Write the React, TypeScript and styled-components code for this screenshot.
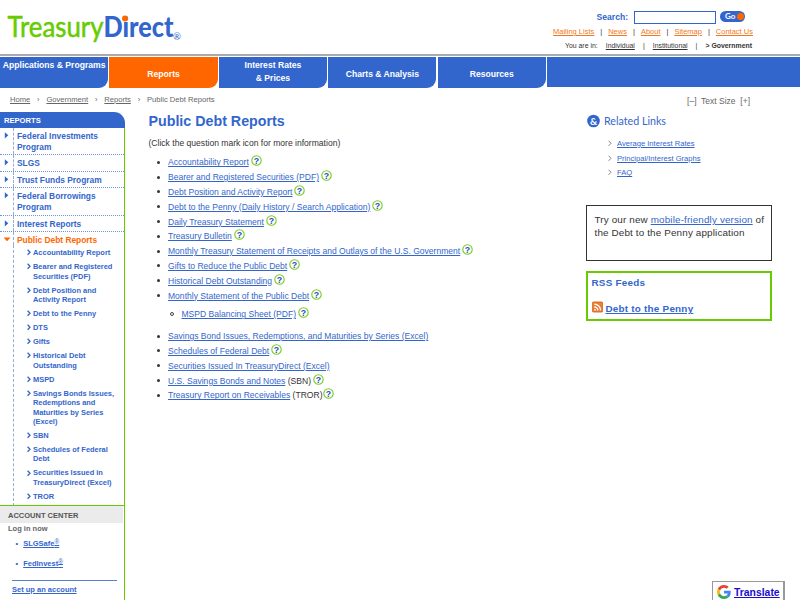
import React from "react";
import styled, { createGlobalStyle } from "styled-components";

const BLUE = "#3366cc";
const ORANGE = "#ff6600";
const GREEN = "#66cc00";

const GlobalStyle = createGlobalStyle`
  html, body { margin: 0; background: #fff; overflow: hidden; }
  body { font-family: "Liberation Sans", Arial, sans-serif; color: #333; }
  *, *::before, *::after { box-sizing: border-box; }
  ul { list-style: none; margin: 0; padding: 0; }
`;

const Page = styled.div`
  width: 800px;
  height: 600px;
  overflow: hidden;
`;

const Header = styled.header`
  height: 54px;
  display: flex;
  justify-content: space-between;
`;

const Logo = styled.svg`
  display: block;
  width: 200px;
  height: 54px;
  font-family: "Lato", sans-serif;
`;

const HeaderTools = styled.div`
  width: 250px;
  padding-top: 10px;
`;

const SearchRow = styled.form`
  display: flex;
  align-items: center;
  height: 14px;
  margin: 0;
  padding-left: 46.5px;
`;

const SearchLabel = styled.label`
  width: 37.5px;
  font-size: 8.6px;
  font-weight: bold;
  color: ${BLUE};
`;

const SearchInput = styled.input`
  width: 82px;
  height: 13px;
  padding: 0 2px;
  border: 1px solid ${BLUE};
  background: #fff;
  font-size: 8px;
`;

const GoButton = styled.button`
  display: flex;
  align-items: center;
  justify-content: space-between;
  width: 25px;
  height: 11px;
  margin: -2px 0 0 4px;
  padding: 0 1px 0 5px;
  border: 0;
  border-radius: 6px;
  background: ${BLUE};
  color: #fff;
  font: bold 8px/11px "Lato", sans-serif;

  &::after {
    content: "";
    flex: none;
    width: 7px;
    height: 7px;
    border-radius: 50%;
    background: ${ORANGE};
  }
`;

const LinkRow = styled.div`
  display: flex;
  justify-content: space-between;
  width: 200px;
  height: 15px;
  margin-left: 3px;
  font-size: 7.5px;
  line-height: 15px;
  white-space: nowrap;
`;

const LocationRow = styled(LinkRow)`
  width: 187px;
  margin-left: 15px;
  font-size: 6.9px;
  line-height: 13px;
`;

const Anchor = styled.a<{ $color?: string }>`
  color: ${(p) => p.$color || BLUE};
  text-decoration: underline;
  text-decoration-thickness: 1px;
  text-underline-offset: 1px;
`;

const Nav = styled.nav`
  display: flex;
  gap: 1.1px;
  height: 34px;
  border-top: 2px solid #aaa;
  padding-top: 1px;
`;

const NavItem = styled.a<{ $active?: boolean; $top?: boolean }>`
  width: 108.3px;
  height: 31px;
  flex: none;
  display: flex;
  align-items: ${(p) => (p.$top ? "flex-start" : "center")};
  justify-content: center;
  padding-top: ${(p) => (p.$top ? "2px" : "3px")};
  border-radius: 0 0 9px 0;
  background: ${(p) => (p.$active ? ORANGE : BLUE)};
  color: #fff;
  font-size: 8.6px;
  font-weight: bold;
  line-height: 12.5px;
  text-align: center;
  white-space: pre-line;
`;

const NavFiller = styled.div`
  flex: 1;
  height: 30px;
  background: ${BLUE};
`;

const Crumbs = styled.div`
  display: flex;
  justify-content: space-between;
  height: 24px;
  padding: 7px 50px 0 10px;
  font-size: 7.6px;
  line-height: 10px;
  color: #666;
`;

const CrumbTrail = styled.div`
  display: flex;
  gap: 6.8px;
  white-space: nowrap;
`;

const TextSize = styled.div`
  font-size: 8.5px;
  line-height: 12px;
  white-space: pre;
`;

const Body = styled.div`
  display: flex;
  align-items: flex-start;
`;

const Sidebar = styled.aside`
  width: 125px;
  height: 488px;
  flex: none;
`;

const SidebarTitle = styled.div`
  height: 16px;
  padding-left: 4px;
  border-radius: 0 11px 0 0;
  background: ${BLUE};
  color: #fff;
  font-size: 7.6px;
  font-weight: bold;
  line-height: 17px;
`;

const SidebarBody = styled.div`
  height: 472px;
  border-right: 1px solid ${GREEN};
`;

const Menu = styled.ul`
  height: 377px;
  font-weight: bold;
  color: ${BLUE};
`;

const MenuRow = styled.li<{ $open?: boolean }>`
  display: flex;
  color: ${(p) => (p.$open ? ORANGE : BLUE)};
  font-size: 8.4px;
  line-height: 11px;
  border-bottom: ${(p) => (p.$open ? "0" : "1px dotted #6f95d8")};
`;

const MenuMarker = styled.span`
  width: 14px;
  flex: none;
  padding: 4px 0 0 3.5px;
  border-right: 1px dashed #8fb0dd;
  line-height: 0;
`;

const MenuText = styled.span<{ $h: number }>`
  height: ${(p) => p.$h}px;
  padding: 3px 0 0 3px;
  white-space: pre-line;
`;

const SubMenu = styled.ul`
  height: 261px;
  margin-left: 13px;
  padding: 3px 0 0 13px;
  border-left: 1px dashed #8fb0dd;
  font-size: 7.45px;
  line-height: 9.37px;
`;

const SubItem = styled.li`
  display: flex;
  gap: 2px;
  margin-bottom: 4.7px;
  white-space: pre;

  svg { flex: none; margin-top: 1.2px; }
`;

const AccountTitle = styled.div`
  height: 18px;
  padding-left: 8px;
  border-top: 1px solid ${GREEN};
  background: linear-gradient(#ebebeb, #ebebeb) left / calc(100% - 1px) 100% no-repeat padding-box;
  color: #555;
  font-size: 7.5px;
  font-weight: bold;
  line-height: 19px;
`;

const Account = styled.div`
  padding-left: 8px;
  color: #666;
  font-size: 7.5px;
  font-weight: bold;
  line-height: 12px;
`;

const AccountLink = styled.div`
  height: 19.5px;
  padding: 3px 0 0 7.5px;
  color: ${BLUE};
  display: flex;
  gap: 5px;

  sup { font-size: 6.5px; line-height: 0; vertical-align: 2.5px; font-weight: normal; text-decoration: underline; }
`;

const AccountFooter = styled.div`
  width: 105px;
  margin: 5.5px 0 0 4px;
  padding-top: 3px;
  border-top: 1px solid #5580cc;
`;

const Main = styled.main`
  width: 438px;
  flex: none;
  padding-left: 23.5px;
`;

const Title = styled.h1`
  margin: 0;
  height: 18px;
  font-size: 14.25px;
  line-height: 18px;
  color: ${BLUE};
  white-space: nowrap;
`;

const Intro = styled.p`
  margin: 8px 0 6px;
  font-size: 8.57px;
  line-height: 11px;
`;

const Reports = styled.ul`
  font-size: 8.56px;
`;

const ReportRow = styled.li<{ $nested?: boolean }>`
  display: flex;
  align-items: center;
  height: ${(p) => (p.$nested ? "18.6px" : "14.8px")};
  margin-bottom: ${(p) => (p.$nested ? "7.2px" : "0")};
  padding: ${(p) => (p.$nested ? "4px 0 0 21.5px" : "0 0 0 8px")};
  white-space: pre;

  &::before {
    content: "";
    width: ${(p) => (p.$nested ? "4px" : "3px")};
    height: ${(p) => (p.$nested ? "4px" : "3px")};
    margin-right: ${(p) => (p.$nested ? "7.5px" : "8.5px")};
    border-radius: 50%;
    border: ${(p) => (p.$nested ? "1px solid #444" : "0")};
    background: ${(p) => (p.$nested ? "transparent" : "#333")};
  }
`;

const HelpIcon = styled.svg<{ $tight?: boolean }>`
  width: 11px;
  height: 11px;
  flex: none;
  margin: -3px 0 0 ${(p) => (p.$tight ? "0" : "2px")};
`;

const Aside = styled.aside`
  width: 186px;
  margin-left: 23px;
`;

const RelatedTitle = styled.h2`
  height: 18px;
  margin: 0 0 0 1px;

  svg { display: block; font-family: "Lato", sans-serif; font-weight: normal; }
`;

const RelatedList = styled.ul`
  height: 75px;
  padding: 6px 0 0 22px;
  font-size: 7.6px;
`;

const RelatedItem = styled.li`
  display: flex;
  align-items: center;
  height: 14.8px;
  gap: 5px;
`;

const Notice = styled.div`
  height: 56px;
  padding: 8px 7.5px;
  border: 1px solid #333;
  font-size: 9.9px;
  letter-spacing: 0.14px;
  line-height: 12.7px;
  white-space: nowrap;
`;

const Feeds = styled.section`
  height: 50px;
  margin-top: 10px;
  padding: 3px 3.5px;
  border: 2px solid ${GREEN};
  color: ${BLUE};
  font-size: 9.9px;
  letter-spacing: 0.23px;
  font-weight: bold;
  line-height: 14px;
`;

const FeedRow = styled.div`
  display: flex;
  gap: 3px;
  margin-top: 11px;
  line-height: 16px;
`;

const Translate = styled.div`
  position: fixed;
  left: 712px;
  top: 581px;
  display: flex;
  align-items: center;
  gap: 3px;
  width: 73px;
  height: 22px;
  padding-left: 4px;
  border: 1px solid #999;
  border-right-width: 2px;
  background: #fff;
  font-size: 10.4px;
  font-weight: bold;
`;

const Chevron = ({ color = BLUE, thin = false }) => (
  <svg width="4" height="7" viewBox="0 0 4 7" fill="none" stroke={color} strokeWidth={thin ? 0.8 : 1.3}>
    <path d="M.6 .8 3 3.3 .6 5.8" />
  </svg>
);

const Help = ({ tight = false }) => (
  <HelpIcon viewBox="0 0 11 11" $tight={tight}>
    <circle cx="5.5" cy="5.5" r="4.7" fill="#fff" stroke="#77cc22" strokeWidth="1.1" />
    <text x="5.5" y="8.6" textAnchor="middle" fontSize="8.8" fontWeight="bold" fill="#2450b0">?</text>
  </HelpIcon>
);

const navItems = [
  { label: "Applications & Programs", top: true },
  { label: "Reports", active: true },
  { label: "Interest Rates\n& Prices", top: true },
  { label: "Charts & Analysis" },
  { label: "Resources" },
];

const menuItems: [string, number][] = [
  ["Federal Investments\nProgram", 26.4],
  ["SLGS", 15.4],
  ["Trust Funds Program", 15.6],
  ["Federal Borrowings\nProgram", 26.4],
  ["Interest Reports", 15.4],
];

const subItems = [
  "Accountability Report",
  "Bearer and Registered\nSecurities (PDF)",
  "Debt Position and\nActivity Report",
  "Debt to the Penny",
  "DTS",
  "Gifts",
  "Historical Debt\nOutstanding",
  "MSPD",
  "Savings Bonds Issues,\nRedemptions and\nMaturities by Series\n(Excel)",
  "SBN",
  "Schedules of Federal\nDebt",
  "Securities Issued in\nTreasuryDirect (Excel)",
  "TROR",
];

type Report = { text: string; after?: string; help?: boolean; nested?: boolean; tight?: boolean };
const reports: Report[] = [
  { text: "Accountability Report", help: true },
  { text: "Bearer and Registered Securities (PDF)", help: true },
  { text: "Debt Position and Activity Report", help: true },
  { text: "Debt to the Penny (Daily History / Search Application)", help: true },
  { text: "Daily Treasury Statement", help: true },
  { text: "Treasury Bulletin", help: true },
  { text: "Monthly Treasury Statement of Receipts and Outlays of the U.S. Government", help: true },
  { text: "Gifts to Reduce the Public Debt", help: true },
  { text: "Historical Debt Outstanding", help: true },
  { text: "Monthly Statement of the Public Debt", help: true },
  { text: "MSPD Balancing Sheet (PDF)", help: true, nested: true },
  { text: "Savings Bond Issues, Redemptions, and Maturities by Series (Excel)" },
  { text: "Schedules of Federal Debt", help: true },
  { text: "Securities Issued In TreasuryDirect (Excel)" },
  { text: "U.S. Savings Bonds and Notes", after: " (SBN)", help: true },
  { text: "Treasury Report on Receivables", after: " (TROR)", help: true, tight: true },
];

const topLinks = ["Mailing Lists", "News", "About", "Sitemap", "Contact Us"];

export default function App() {
  return (
    <Page>
      <GlobalStyle />
      <Header>
        <Logo viewBox="0 0 200 54">
          <text x="7.5" y="37.3" fontSize="28.5" fill={GREEN} stroke={GREEN} strokeWidth="0.5" textLength="96" lengthAdjust="spacingAndGlyphs">Treasury</text>
          <text x="103.5" y="37.3" fontSize="28.5" fontWeight="900" fill={BLUE} textLength="70" lengthAdjust="spacingAndGlyphs">Direct</text>
          <circle cx="125" cy="18.5" r="3" fill={ORANGE} />
          <text x="173" y="39.5" fontSize="9.5" fill={BLUE}>®</text>
        </Logo>
        <HeaderTools>
          <SearchRow>
            <SearchLabel>Search:</SearchLabel>
            <SearchInput aria-label="Search" />
            <GoButton type="button">Go</GoButton>
          </SearchRow>
          <LinkRow>
            {topLinks.map((label, i) => (
              <React.Fragment key={label}>
                {i > 0 && <span>|</span>}
                <Anchor $color="#f07820">{label}</Anchor>
              </React.Fragment>
            ))}
          </LinkRow>
          <LocationRow>
            <span>You are in:</span>
            <Anchor $color="#333">Individual</Anchor>
            <span>|</span>
            <Anchor $color="#333">Institutional</Anchor>
            <span>|</span>
            <b>&gt; Government</b>
          </LocationRow>
        </HeaderTools>
      </Header>
      <Nav>
        {navItems.map((n) => (
          <NavItem key={n.label} $active={n.active} $top={n.top}>{n.label}</NavItem>
        ))}
        <NavFiller />
      </Nav>
      <Crumbs>
        <CrumbTrail>
          <Anchor $color="#666">Home</Anchor>
          <span>›</span>
          <Anchor $color="#666">Government</Anchor>
          <span>›</span>
          <Anchor $color="#666">Reports</Anchor>
          <span>›</span>
          <span>Public Debt Reports</span>
        </CrumbTrail>
        <TextSize>{"[–]  Text Size  [+]"}</TextSize>
      </Crumbs>
      <Body>
        <Sidebar>
          <SidebarTitle>REPORTS</SidebarTitle>
          <SidebarBody>
            <Menu>
              {menuItems.map(([label, h]) => (
                <MenuRow key={label}>
                  <MenuMarker>
                    <svg width="6" height="7" viewBox="0 0 6 7"><path d="M.8 .2 4.3 3.3 .8 6.4Z" fill={BLUE} /></svg>
                  </MenuMarker>
                  <MenuText $h={h}>{label}</MenuText>
                </MenuRow>
              ))}
              <MenuRow $open>
                <MenuMarker>
                  <svg width="7" height="6" viewBox="0 0 7 6"><path d="M-.5 1.5h7L3 5.3Z" fill={ORANGE} /></svg>
                </MenuMarker>
                <MenuText $h={13}>Public Debt Reports</MenuText>
              </MenuRow>
              <SubMenu>
                {subItems.map((label) => (
                  <SubItem key={label}>
                    <Chevron />
                    <span>{label}</span>
                  </SubItem>
                ))}
              </SubMenu>
            </Menu>
            <AccountTitle>ACCOUNT CENTER</AccountTitle>
            <Account>
              Log in now
              <AccountLink><span>•</span><Anchor>SLGSafe<sup>®</sup></Anchor></AccountLink>
              <AccountLink><span>•</span><Anchor>FedInvest<sup>®</sup></Anchor></AccountLink>
              <AccountFooter><Anchor>Set up an account</Anchor></AccountFooter>
            </Account>
          </SidebarBody>
        </Sidebar>
        <Main>
          <Title>Public Debt Reports</Title>
          <Intro>(Click the question mark icon for more information)</Intro>
          <Reports>
            {reports.map((r) => (
              <ReportRow key={r.text} $nested={r.nested}>
                <Anchor>{r.text}</Anchor>
                {r.after && <span>{r.after}</span>}
                {r.help && <Help tight={r.tight} />}
              </ReportRow>
            ))}
          </Reports>
        </Main>
        <Aside>
          <RelatedTitle>
            <svg width="100" height="18" viewBox="0 0 100 18">
              <circle cx="6.5" cy="9" r="6.3" fill={BLUE} />
              <text x="6.5" y="12.6" fontSize="10" fontWeight="bold" fill="#fff" textAnchor="middle">&amp;</text>
              <text x="17" y="13" fontSize="11" fill={BLUE} textLength="62" lengthAdjust="spacingAndGlyphs">Related Links</text>
            </svg>
          </RelatedTitle>
          <RelatedList>
            {["Average Interest Rates", "Principal/Interest Graphs", "FAQ"].map((label) => (
              <RelatedItem key={label}>
                <Chevron color="#666" thin />
                <Anchor>{label}</Anchor>
              </RelatedItem>
            ))}
          </RelatedList>
          <Notice>
            Try our new <Anchor>mobile-friendly version</Anchor> of<br />
            the Debt to the Penny application
          </Notice>
          <Feeds>
            RSS Feeds
            <FeedRow>
              <svg width="11" height="12" viewBox="0 0 11 12" fill="none" stroke="#fff" strokeWidth="1.3">
                <rect x="0.4" y="0.9" width="10.2" height="10.2" rx="1.2" fill="#ed7d31" stroke="#c85a10" strokeWidth="0.7" />
                <path d="M2.3 3.2a6.3 6.3 0 0 1 6.3 6.3M2.3 6a3.5 3.5 0 0 1 3.5 3.5" />
                <circle cx="3" cy="8.8" r="0.9" fill="#fff" stroke="none" />
              </svg>
              <Anchor>Debt to the Penny</Anchor>
            </FeedRow>
          </Feeds>
        </Aside>
      </Body>
      <Translate>
        <svg width="14" height="14" viewBox="0 0 48 48">
          <path fill="#EA4335" d="M24 9.5c3.54 0 6.71 1.22 9.21 3.6l6.85-6.85C35.9 2.38 30.47 0 24 0 14.62 0 6.51 5.38 2.56 13.22l7.98 6.19C12.43 13.72 17.74 9.5 24 9.5z" />
          <path fill="#4285F4" d="M46.98 24.55c0-1.57-.15-3.09-.38-4.55H24v9.02h12.94c-.58 2.96-2.26 5.48-4.78 7.18l7.73 6c4.51-4.18 7.09-10.36 7.09-17.65z" />
          <path fill="#FBBC05" d="M10.53 28.59c-.48-1.45-.76-2.99-.76-4.59s.27-3.14.76-4.59l-7.98-6.19C.92 16.46 0 20.12 0 24c0 3.88.92 7.54 2.56 10.78l7.97-6.19z" />
          <path fill="#34A853" d="M24 48c6.48 0 11.93-2.13 15.89-5.81l-7.73-6c-2.15 1.45-4.92 2.3-8.16 2.3-6.26 0-11.57-4.22-13.47-9.91l-7.98 6.19C6.51 42.62 14.62 48 24 48z" />
        </svg>
        <Anchor $color="#1a0dcc">Translate</Anchor>
      </Translate>
    </Page>
  );
}
